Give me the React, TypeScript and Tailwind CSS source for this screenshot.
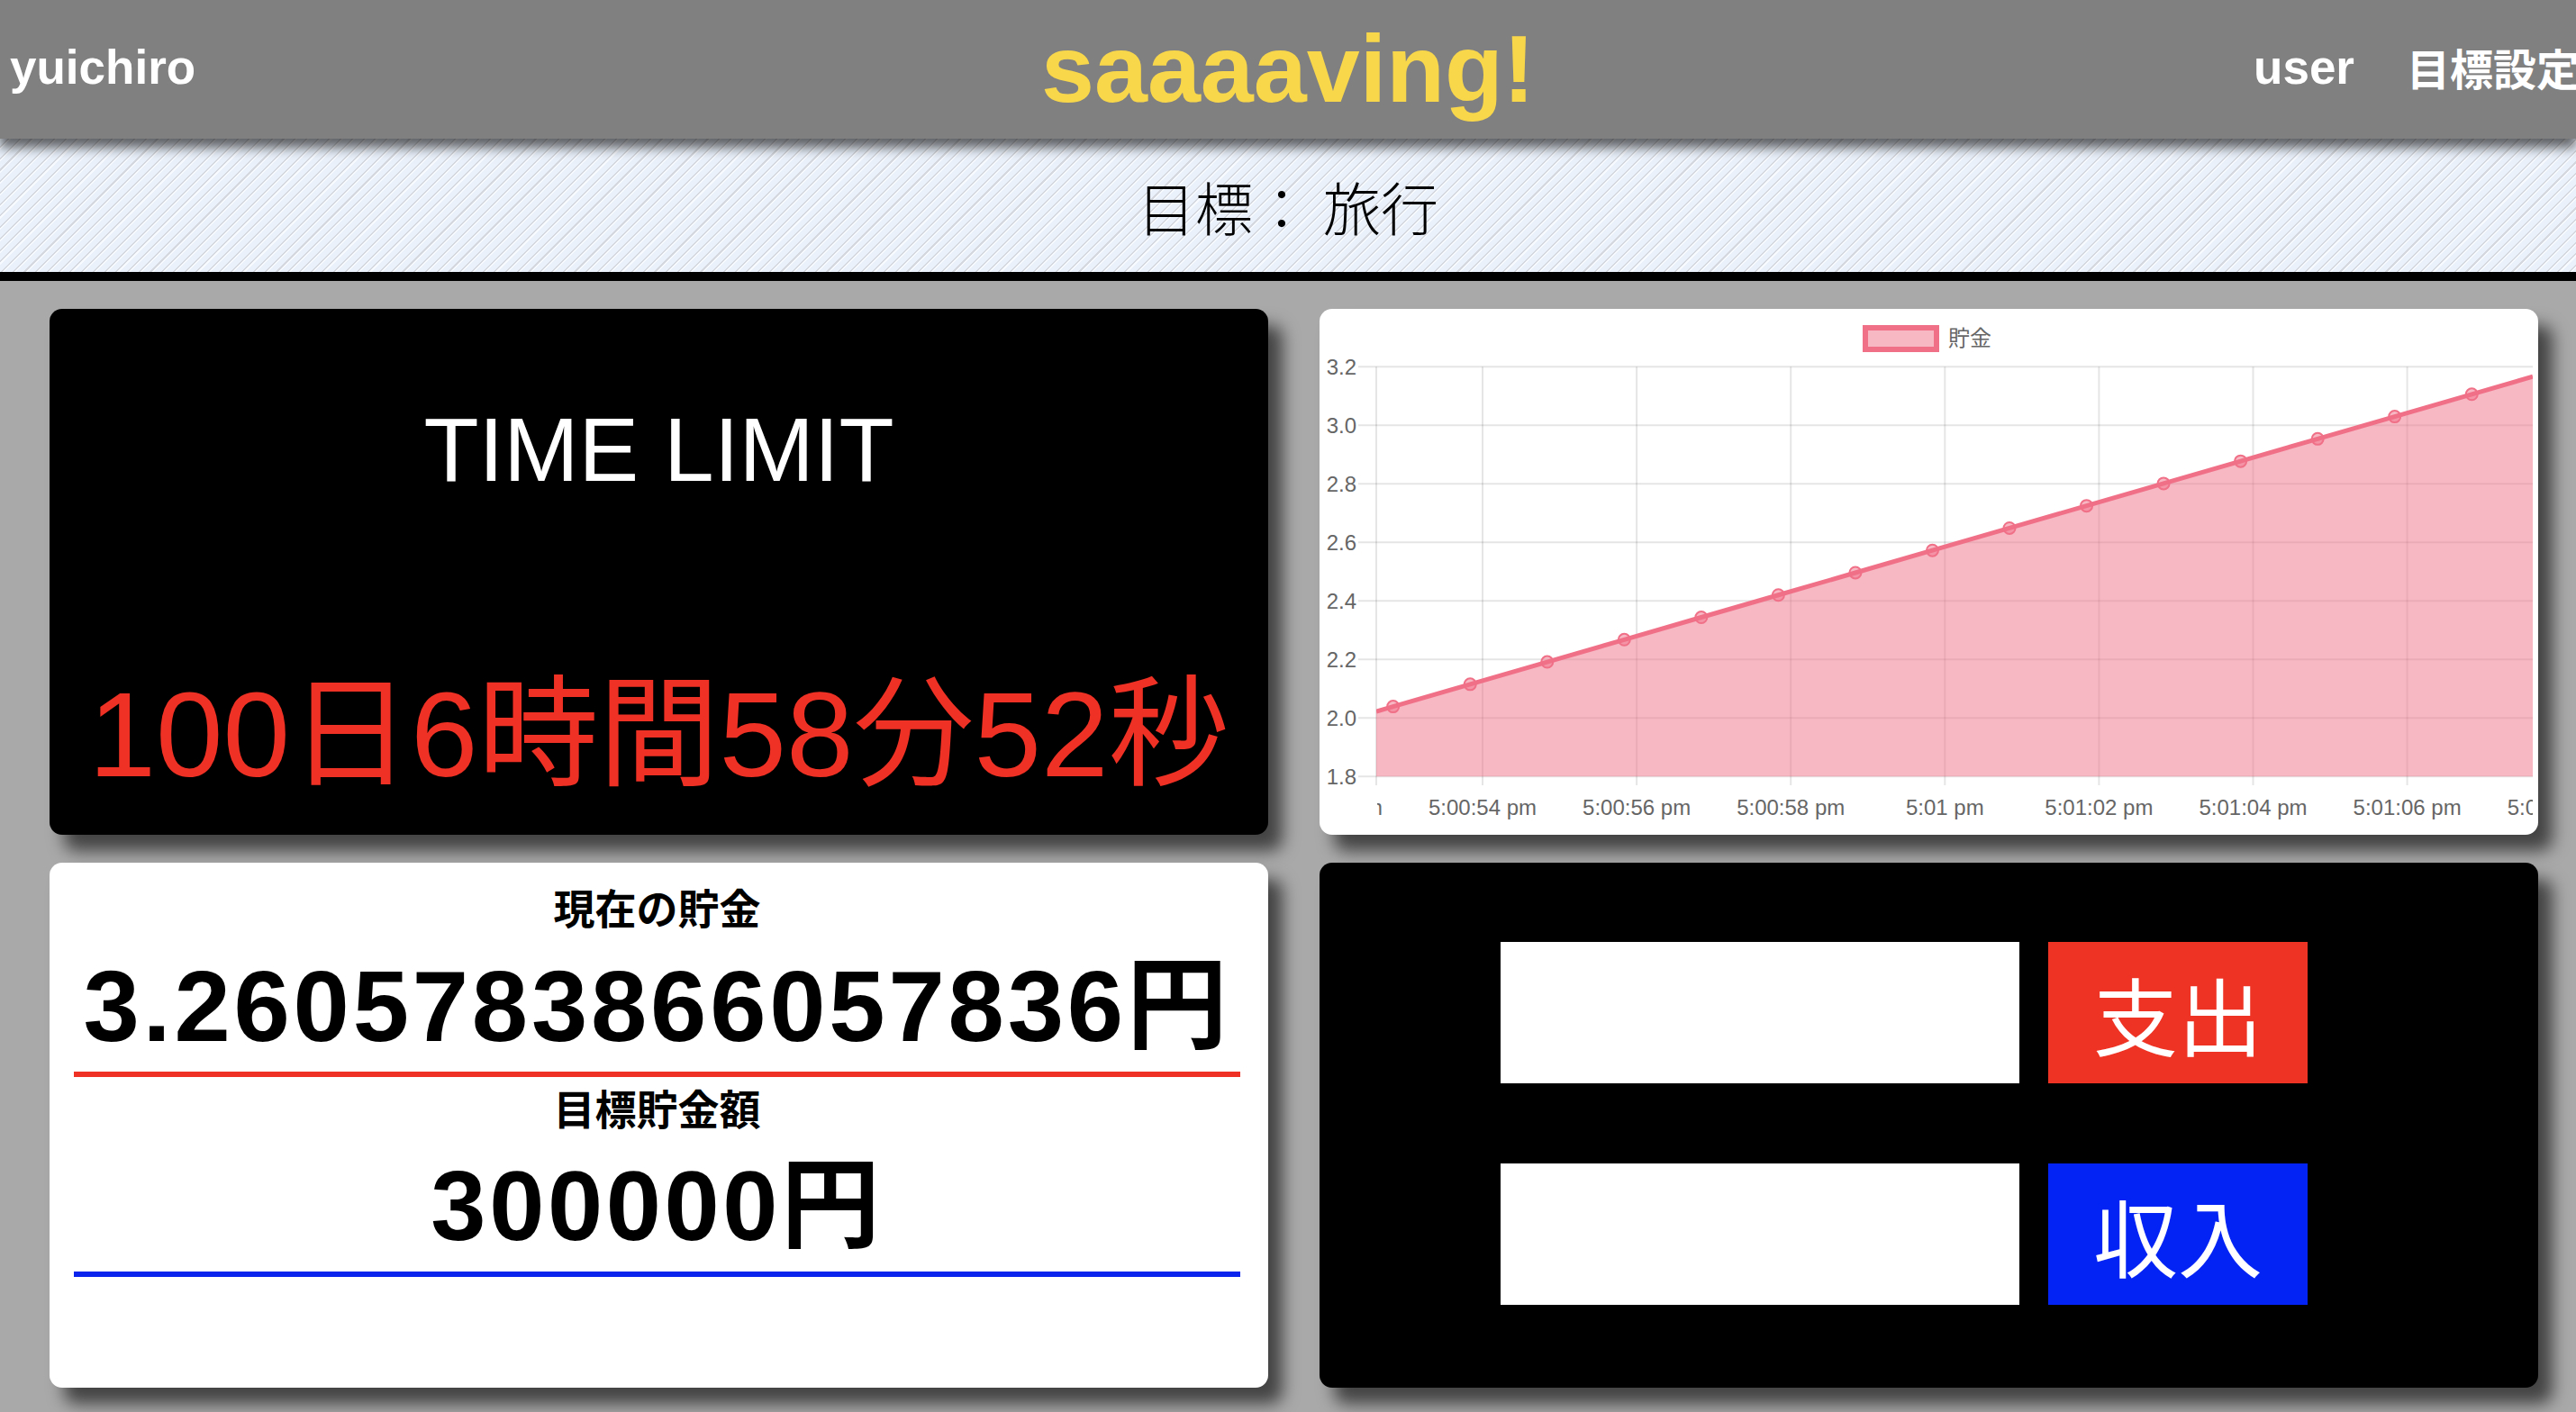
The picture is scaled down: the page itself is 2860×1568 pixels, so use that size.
import React from 'react';

const gridYs = [0, 1, 2, 3, 4, 5, 6, 7].map((k) => 64.3 + 65 * k);
const yLabels = ['3.2', '3.0', '2.8', '2.6', '2.4', '2.2', '2.0', '1.8'];
const gridXs = [63, 181, 352.1, 523.2, 694.3, 865.4, 1036.5, 1207.6];
const xLabels = [
  { x: 10, t: '5:00:52 pm' },
  { x: 181, t: '5:00:54 pm' },
  { x: 352.1, t: '5:00:56 pm' },
  { x: 523.2, t: '5:00:58 pm' },
  { x: 694.3, t: '5:01 pm' },
  { x: 865.4, t: '5:01:02 pm' },
  { x: 1036.5, t: '5:01:04 pm' },
  { x: 1207.6, t: '5:01:06 pm' },
  { x: 1378.7, t: '5:01:08 pm' },
];

const points = Array.from({ length: 15 }, (_, i) => ({
  x: 81.7 + 85.54 * i,
  y: 441.6 - 24.77 * i,
}));

const lineStart = { x: 63, y: 447 };
const lineEnd = { x: 1347, y: 75.2 };

const SavingChart: React.FC = () => {
  const linePts = [lineStart, ...points, lineEnd].map((p) => `${p.x},${p.y}`).join(' ');
  const areaPts = `${linePts} 1347,519.3 63,519.3`;

  return (
    <svg width="1353" height="584" viewBox="0 0 1353 584" className="block">
      <defs>
        <clipPath id="plot">
          <rect x="63" y="0" width="1284" height="520" />
        </clipPath>
        <clipPath id="xlabels">
          <rect x="64" y="530" width="1283" height="50" />
        </clipPath>
      </defs>

      {/* legend */}
      <rect x="606" y="21" width="79" height="24" fill="rgba(240,112,136,0.5)" stroke="#f07088" strokeWidth="6" />
      <text x="698" y="41" fontSize="24" fill="#666" fontFamily="'Noto Sans CJK JP', sans-serif">
        貯金
      </text>

      {/* grid */}
      {gridYs.map((y, i) => (
        <g key={y}>
          <line x1="43" x2="1347" y1={y} y2={y} stroke="rgba(0,0,0,0.1)" strokeWidth="2" />
          <text
            x="41"
            y={y + 9}
            fontSize="24"
            fill="#666"
            textAnchor="end"
            fontFamily="'Liberation Sans', sans-serif"
          >
            {yLabels[i]}
          </text>
        </g>
      ))}
      {gridXs.map((x) => (
        <line key={x} x1={x} x2={x} y1="64.3" y2="529" stroke="rgba(0,0,0,0.1)" strokeWidth="2" />
      ))}

      <g clipPath="url(#xlabels)">
        {xLabels.map((l) => (
          <text
            key={l.t}
            x={l.x}
            y="562"
            fontSize="24"
            fill="#666"
            textAnchor="middle"
            fontFamily="'Liberation Sans', sans-serif"
          >
            {l.t}
          </text>
        ))}
      </g>

      {/* data */}
      <g clipPath="url(#plot)">
        <polygon points={areaPts} fill="rgba(240,112,136,0.5)" />
        <polyline points={linePts} fill="none" stroke="#f07088" strokeWidth="5" />
        {points.map((p) => (
          <circle key={p.x} cx={p.x} cy={p.y} r="6.5" fill="rgba(240,112,136,0.5)" stroke="#f07088" strokeWidth="2" />
        ))}
      </g>
    </svg>
  );
};

const App: React.FC = () => {
  return (
    <div className="min-h-screen w-full overflow-hidden bg-[#a9a9a9] font-['Liberation_Sans','Noto_Sans_CJK_JP',sans-serif]">
      <header className="relative z-10 grid h-[154px] grid-cols-[1fr_auto_1fr] items-center bg-[#808080] shadow-[0_10px_12px_rgba(0,0,0,0.6)]">
        <div className="pb-[6px] pl-[11px] text-[53px] font-bold leading-none text-white">yuichiro</div>
        <h1 className="pb-[2px] text-[106px] font-bold leading-none text-[#f9d74a]">saaaaving!</h1>
        <nav className="-mr-[4px] flex items-center justify-end gap-[58px] pb-[6px] font-bold leading-none text-white">
          <span className="text-[53px]">user</span>
          <span className="font-['Noto_Sans_CJK_JP',sans-serif] text-[48px]">目標設定</span>
        </nav>
      </header>

      <div className="flex h-[158px] items-center justify-center border-b-[10px] border-black bg-[image:repeating-linear-gradient(135deg,#eaf1fb_0px,#eaf1fb_6px,#d5d9df_6px,#d5d9df_7.5px,#f7faff_7.5px,#f7faff_9px)]">
        <p className="font-['Noto_Sans_CJK_JP',sans-serif] text-[64px] font-light text-black">目標： 旅行</p>
      </div>

      <main className="grid grid-cols-[1353px_1353px] gap-x-[57px] gap-y-[31px] pl-[55px] pt-[31px]">
        <section className="flex h-[584px] flex-col items-center rounded-[14px] bg-black shadow-[16px_18px_18px_rgba(0,0,0,0.6)]">
          <p className="mt-[106px] text-[100px] leading-none text-white">TIME LIMIT</p>
          <p className="mt-[200px] whitespace-nowrap text-[134px] leading-none text-[#ee3124]">100日6時間58分52秒</p>
        </section>

        <section className="h-[584px] overflow-hidden rounded-[14px] bg-white shadow-[16px_18px_18px_rgba(0,0,0,0.6)]">
          <SavingChart />
        </section>

        <section className="flex h-[583px] flex-col items-center rounded-[14px] bg-white pl-[27px] pr-[31px] shadow-[16px_18px_18px_rgba(0,0,0,0.6)]">
          <h2 className="mt-[25px] font-['Noto_Sans_CJK_JP',sans-serif] text-[46px] font-bold leading-none text-black">
            現在の貯金
          </h2>
          <p className="mt-[33px] whitespace-nowrap text-[112px] font-bold leading-none tracking-[3.8px] text-black">
            3.2605783866057836円
          </p>
          <div className="mt-[16px] h-[6px] w-full bg-[#ee3124]" />
          <h2 className="mt-[10px] font-['Noto_Sans_CJK_JP',sans-serif] text-[46px] font-bold leading-none text-black">
            目標貯金額
          </h2>
          <p className="mt-[32px] whitespace-nowrap text-[110px] font-bold leading-none tracking-[3.6px] text-black">
            300000円
          </p>
          <div className="mt-[18px] h-[6px] w-full bg-[#0a24ee]" />
        </section>

        <section className="flex h-[583px] flex-col gap-[89px] rounded-[14px] bg-black pl-[201px] pt-[88px] shadow-[16px_18px_18px_rgba(0,0,0,0.6)]">
          <div className="flex gap-[32px]">
            <input type="text" className="h-[157px] w-[576px] border-0 bg-white outline-none" />
            <button
              type="button"
              className="h-[157px] w-[288px] bg-[#ee3324] font-['Noto_Sans_CJK_JP',sans-serif] text-[94px] leading-none text-white"
            >
              支出
            </button>
          </div>
          <div className="flex gap-[32px]">
            <input type="text" className="h-[157px] w-[576px] border-0 bg-white outline-none" />
            <button
              type="button"
              className="h-[157px] w-[288px] bg-[#0323f5] font-['Noto_Sans_CJK_JP',sans-serif] text-[94px] leading-none text-white"
            >
              収入
            </button>
          </div>
        </section>
      </main>
    </div>
  );
};

export default App;
